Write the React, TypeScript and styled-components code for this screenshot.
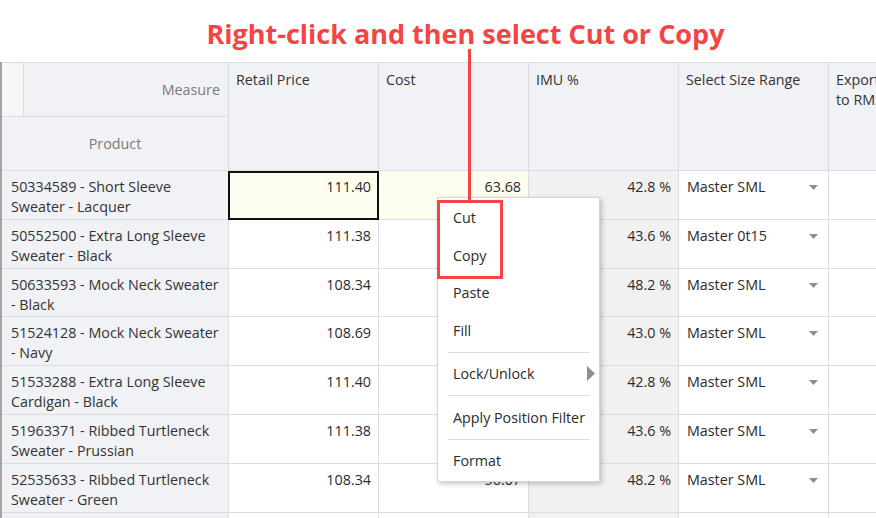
import React from "react";
import styled, { createGlobalStyle } from "styled-components";

const GlobalStyle = createGlobalStyle`
  *, *::before, *::after { box-sizing: border-box; }
  html, body { margin: 0; padding: 0; background: #ffffff; }
  body { font-family: "Open Sans", "Noto Sans", sans-serif; color: #333333; }
`;

type Row = {
  name: [string, string];
  retail: string;
  cost: string;
  imu: string;
  size: string;
};

const rows: Row[] = [
  { name: ["50334589 - Short Sleeve", "Sweater - Lacquer"], retail: "111.40", cost: "63.68", imu: "42.8 %", size: "Master SML" },
  { name: ["50552500 - Extra Long Sleeve", "Sweater - Black"], retail: "111.38", cost: "62.84", imu: "43.6 %", size: "Master 0t15" },
  { name: ["50633593 - Mock Neck Sweater", "- Black"], retail: "108.34", cost: "56.07", imu: "48.2 %", size: "Master SML" },
  { name: ["51524128 - Mock Neck Sweater", "- Navy"], retail: "108.69", cost: "61.95", imu: "43.0 %", size: "Master SML" },
  { name: ["51533288 - Extra Long Sleeve", "Cardigan - Black"], retail: "111.40", cost: "63.68", imu: "42.8 %", size: "Master SML" },
  { name: ["51963371 - Ribbed Turtleneck", "Sweater - Prussian"], retail: "111.38", cost: "62.84", imu: "43.6 %", size: "Master SML" },
  { name: ["52535633 - Ribbed Turtleneck", "Sweater - Green"], retail: "108.34", cost: "56.07", imu: "48.2 %", size: "Master SML" },
  { name: ["52535634 - Ribbed Turtleneck", "Sweater - Navy"], retail: "108.34", cost: "56.07", imu: "48.2 %", size: "Master SML" },
];

const Page = styled.div`
  position: relative;
  width: 876px;
  height: 518px;
  overflow: hidden;
  background: #ffffff;
`;

const Title = styled.h1`
  margin: 0;
  height: 62px;
  display: flex;
  align-items: center;
  justify-content: center;
  padding-left: 55px;
  padding-top: 4px;
  font-family: "Open Sans", sans-serif;
  font-weight: 700;
  font-size: 27px;
  color: #f54444;
  white-space: nowrap;
`;

const Grid = styled.div`
  width: max-content;
  border-left: 2px solid #a4a4a4;
  font-size: 14.3px;
  line-height: 20px;
`;

const HeaderRow = styled.div`
  display: flex;
  border-top: 1px solid #dcdde0;
`;

const Corner = styled.div`
  width: 227px;
  display: flex;
  flex-direction: column;
  border-right: 1px solid #dcdde0;
  background: #f1f2f5;
`;

const CornerTop = styled.div`
  display: flex;
  height: 54px;
  border-bottom: 1px solid #dcdde0;
`;

const Stub = styled.div`
  width: 22px;
  border-right: 1px solid #dcdde0;
  background: #f5f6f8;
`;

const AxisLabel = styled.div<{ $align: "end" | "center" }>`
  flex: 1;
  display: flex;
  align-items: center;
  justify-content: ${(p) => (p.$align === "end" ? "flex-end" : "center")};
  padding-right: ${(p) => (p.$align === "end" ? "8px" : "0")};
  color: #7a7a7a;
  height: ${(p) => (p.$align === "center" ? "54px" : "auto")};
  border-bottom: ${(p) => (p.$align === "center" ? "1px solid #dcdde0" : "none")};
`;

const ColHeader = styled.div`
  width: 150px;
  height: 108px;
  padding: 7px 8px 0 7px;
  background: #f1f2f5;
  border-right: 1px solid #dcdde0;
  border-bottom: 1px solid #dcdde0;
  color: #333333;
  white-space: nowrap;
`;

const BodyRow = styled.div`
  display: flex;
  height: 48.8px;
`;

const RowHeader = styled.div`
  width: 227px;
  padding: 6px 8px 0 9px;
  background: #f1f2f5;
  border-right: 1px solid #dcdde0;
  border-bottom: 1px solid #dcdde0;
  color: #333333;
  white-space: nowrap;
`;

type Tone = "white" | "grey" | "yellow";
const toneBg: Record<Tone, string> = {
  white: "#ffffff",
  grey: "#f1f1f1",
  yellow: "#fefef0",
};

const Cell = styled.div<{ $tone: Tone; $selected?: boolean }>`
  position: relative;
  width: 150px;
  padding: 6px 7px 0 8px;
  background: ${(p) => toneBg[p.$tone]};
  border-right: 1px solid #dcdde0;
  border-bottom: 1px solid #dcdde0;
  text-align: right;
  white-space: nowrap;
  color: #2b2b2b;
  &::after {
    content: "";
    display: ${(p) => (p.$selected ? "block" : "none")};
    position: absolute;
    top: 0;
    left: -1px;
    right: -1px;
    bottom: -1px;
    border: 2px solid #111111;
  }
`;

const SelectCell = styled.div`
  width: 150px;
  padding: 6px 10px 0 8px;
  display: flex;
  align-items: flex-start;
  justify-content: space-between;
  background: #ffffff;
  border-right: 1px solid #dcdde0;
  border-bottom: 1px solid #dcdde0;
  color: #2b2b2b;
  white-space: nowrap;
`;

const Caret = styled.svg`
  margin-top: 8px;
  flex: none;
`;

const Menu = styled.div`
  position: absolute;
  left: 437px;
  top: 197px;
  width: 163px;
  padding: 1px 0;
  background: #ffffff;
  border: 1px solid #d6d6d6;
  box-shadow: 2px 2px 5px rgba(0, 0, 0, 0.22);
  font-size: 14.3px;
  color: #2b2b2b;
`;

const MenuItem = styled.div`
  position: relative;
  height: 37.5px;
  display: flex;
  align-items: center;
  padding-left: 15px;
  white-space: nowrap;
`;

const MenuSep = styled.div`
  height: 6px;
  display: flex;
  align-items: center;
  padding: 0 9px 0 10px;
  &::before {
    content: "";
    flex: 1;
    height: 1px;
    background: #dedede;
  }
`;

const SubArrow = styled.svg`
  position: absolute;
  right: 4px;
  top: 11px;
`;

const Callout = styled.div`
  position: absolute;
  left: 437px;
  top: 200px;
  width: 66px;
  height: 79px;
  border: 3px solid #f54444;
`;

const Pointer = styled.div`
  position: absolute;
  left: 468px;
  top: 49px;
  width: 3px;
  height: 152px;
  background: #f54444;
`;

const DownCaret = () => (
  <Caret width="9" height="5" viewBox="0 0 9 5">
    <polygon points="0,0 9,0 4.5,5" fill="#8d8d8d" />
  </Caret>
);

export default function App() {
  return (
    <Page>
      <GlobalStyle />
      <Title>Right-click and then select Cut or Copy</Title>
      <Grid>
        <HeaderRow>
          <Corner>
            <CornerTop>
              <Stub />
              <AxisLabel $align="end">Measure</AxisLabel>
            </CornerTop>
            <AxisLabel $align="center">Product</AxisLabel>
          </Corner>
          <ColHeader>Retail Price</ColHeader>
          <ColHeader>Cost</ColHeader>
          <ColHeader>IMU %</ColHeader>
          <ColHeader>Select Size Range</ColHeader>
          <ColHeader>
            Export
            <br />
            to RMS
          </ColHeader>
        </HeaderRow>
        {rows.map((r, i) => (
          <BodyRow key={i}>
            <RowHeader>
              {r.name[0]}
              <br />
              {r.name[1]}
            </RowHeader>
            <Cell $tone={i === 0 ? "yellow" : "white"} $selected={i === 0}>
              {r.retail}
            </Cell>
            <Cell $tone={i === 0 ? "yellow" : "white"}>{r.cost}</Cell>
            <Cell $tone="grey">{r.imu}</Cell>
            <SelectCell>
              <span>{r.size}</span>
              <DownCaret />
            </SelectCell>
            <Cell $tone="white" />
          </BodyRow>
        ))}
      </Grid>

      <Menu>
        <MenuItem>Cut</MenuItem>
        <MenuItem>Copy</MenuItem>
        <MenuItem>Paste</MenuItem>
        <MenuItem>Fill</MenuItem>
        <MenuSep />
        <MenuItem>
          Lock/Unlock
          <SubArrow width="8" height="15" viewBox="0 0 8 15">
            <polygon points="0,0 8,7.5 0,15" fill="#8d8d8d" />
          </SubArrow>
        </MenuItem>
        <MenuSep />
        <MenuItem>Apply Position Filter</MenuItem>
        <MenuSep />
        <MenuItem>Format</MenuItem>
      </Menu>
      <Pointer />
      <Callout />
    </Page>
  );
}
